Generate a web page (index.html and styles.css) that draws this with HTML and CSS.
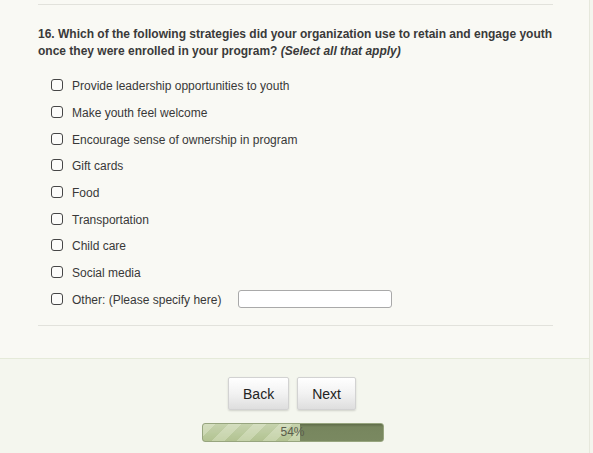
FILE: index.html
```html
<!DOCTYPE html>
<html lang="en">
<head>
  <meta charset="UTF-8" />
  <meta name="viewport" content="width=device-width, initial-scale=1.0"/>
  <title>Survey - Question 16</title>
  <link rel="stylesheet" href="styles.css">
</head>
<body>
  <div class="page">
    <div class="survey">
      <div class="question">
        <p class="q-title">16. Which of the following strategies did your organization use to retain and engage youth once they were enrolled in your program? <em>(Select all that apply)</em></p>

        <ul class="choices">
          <li><label><input type="checkbox" name="q16" value="leadership" /> Provide leadership opportunities to youth</label></li>
          <li><label><input type="checkbox" name="q16" value="welcome" /> Make youth feel welcome</label></li>
          <li><label><input type="checkbox" name="q16" value="ownership" /> Encourage sense of ownership in program</label></li>
          <li><label><input type="checkbox" name="q16" value="gift_cards" /> Gift cards</label></li>
          <li><label><input type="checkbox" name="q16" value="food" /> Food</label></li>
          <li><label><input type="checkbox" name="q16" value="transportation" /> Transportation</label></li>
          <li><label><input type="checkbox" name="q16" value="child_care" /> Child care</label></li>
          <li><label><input type="checkbox" name="q16" value="social_media" /> Social media</label></li>
          <li class="other">
            <label><input type="checkbox" name="q16" value="other" /> Other: (Please specify here)</label>
            <input type="text" class="other-text" name="q16_other" />
          </li>
        </ul>
      </div>
    </div>

    <div class="footer">
      <div class="nav">
        <button type="button">Back</button>
        <button type="button">Next</button>
      </div>
      <div class="progress">
        <div class="progress-fill" style="width: 54%"></div>
        <span class="progress-text">54%</span>
      </div>
    </div>
  </div>
</body>
</html>
```

FILE: styles.css
```css
body {
  margin: 0;
  padding: 0;
  background-color: #f4f5ee;
  font-family: "Liberation Sans", Arial, sans-serif;
  color: #333;
}
.page {
  width: 589px;
  border-right: 1px solid #e6e8dc;
  min-height: 453px;
  background-color: #f4f6ee;
}
.survey {
  background-color: #f9f9f4;
  padding: 4px 36px 32px 38px;
  border-bottom: 1px solid #e5ead9;
}
.question {
  border-top: 1px solid #e2e2dc;
  border-bottom: 1px solid #e2e2dc;
  padding-top: 21px;
  padding-bottom: 12px;
}
.q-title {
  margin: 0;
  font-size: 12px;
  line-height: 17px;
  font-weight: bold;
  color: #3a3a3a;
}
.q-title em {
  font-style: italic;
}
.choices {
  list-style: none;
  margin: 13px 0 0 0;
  padding: 0 0 0 13px;
}
.choices li {
  height: 26.67px;
  display: flex;
  align-items: center;
  font-size: 12px;
  color: #383838;
}
.choices label {
  display: flex;
  align-items: center;
  cursor: pointer;
}
.choices input[type="checkbox"] {
  appearance: none;
  -webkit-appearance: none;
  width: 12px;
  height: 12px;
  margin: -2px 9px 0 0;
  border: 1px solid #464646;
  border-radius: 3px;
  background-color: #fcfcfa;
}
.other-text {
  width: 154px;
  height: 18px;
  box-sizing: border-box;
  margin-left: 17px;
  border: 1px solid #a9a9a9;
  border-radius: 3px;
  background-color: #fff;
  margin-top: -1px;
}
.footer {
  padding-top: 18px;
  padding-bottom: 12px;
}
.nav {
  display: flex;
  justify-content: center;
  gap: 8px;
  margin-left: -5px;
}
.nav button {
  height: 33px;
  padding: 0 14px;
  font-family: "Liberation Sans", Arial, sans-serif;
  font-size: 14px;
  line-height: 33px;
  color: #222;
  background: linear-gradient(to bottom, #ffffff, #f2f2f2 50%, #dedede);
  border: 1px solid #d2d2d2;
  border-radius: 2px;
  box-shadow: 0 1px 2px rgba(0,0,0,0.15);
  cursor: pointer;
}
.progress {
  position: relative;
  width: 182px;
  height: 19px;
  box-sizing: border-box;
  margin: 13px auto 0 auto;
  left: -2px;
  border: 1px solid #97a57f;
  border-radius: 3px;
  background: linear-gradient(to bottom, #5f6c49, #77865e 3px, #7a8961);
  overflow: hidden;
}
.progress-fill {
  height: 100%;
  background:
    linear-gradient(to bottom, rgba(255,255,255,0.25), rgba(255,255,255,0)),
    repeating-linear-gradient(135deg, #c6d3aa 0 9px, #b2c391 9px 18px);
}
.progress-text {
  position: absolute;
  top: 0;
  left: 0;
  right: 0;
  text-align: center;
  font-size: 12px;
  line-height: 17px;
  color: #5a5c4c;
}
```
